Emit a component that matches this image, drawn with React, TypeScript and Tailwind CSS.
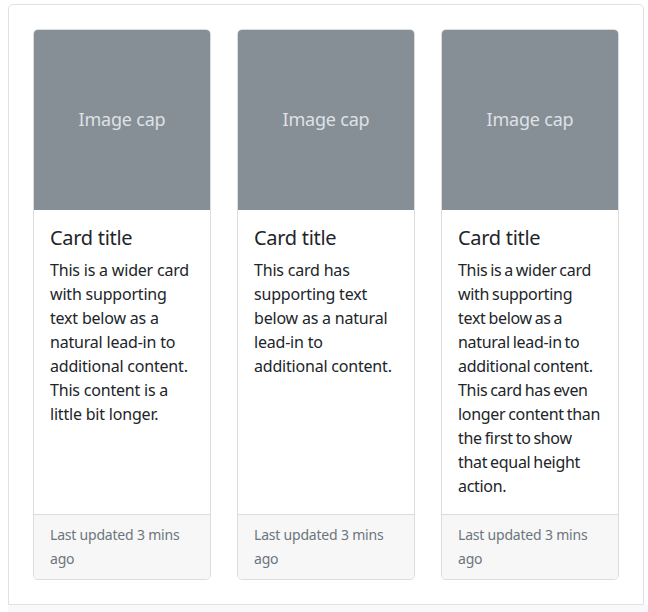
const cards = [
  {
    title: "Card title",
    text: "This is a wider card with supporting text below as a natural lead-in to additional content. This content is a little bit longer.",
    textClass: "tracking-[-0.2px]",
  },
  {
    title: "Card title",
    text: "This card has supporting text below as a natural lead-in to additional content.",
    textClass: "tracking-[-0.2px]",
  },
  {
    title: "Card title",
    text: "This is a wider card with supporting text below as a natural lead-in to additional content. This card has even longer content than the first to show that equal height action.",
    // tighter spacing so "longer content than" stays on one line
    textClass: "tracking-[-0.3px] [word-spacing:-1px]",
  },
];

function Card({ title, text, textClass }: { title: string; text: string; textClass: string }) {
  return (
    <div className="flex flex-col rounded-[5px] border border-[#dcdcdc] bg-white overflow-hidden">
      <div className="flex h-[180px] items-center justify-center bg-[#868e96] pb-0.5 text-[18px] tracking-[-0.2px] text-[#dee2e6]">
        Image cap
      </div>
      <div className="flex-1 p-4">
        <h5 className="mb-2 text-[20px] leading-[1.2] tracking-[-0.3px] text-[#212529]">{title}</h5>
        <p className={`text-base leading-6 text-[#212529] ${textClass}`}>{text}</p>
      </div>
      <div className="border-t border-[#dcdcdc] bg-[#f7f7f7] px-4 py-2">
        <p className="text-sm leading-6 tracking-[-0.2px] text-[#6c757d]">Last updated 3 mins ago</p>
      </div>
    </div>
  );
}

export default function App() {
  return (
    <div
      className="min-h-screen bg-white pl-2 pt-1"
      style={{ fontFamily: '"Noto Sans", "Liberation Sans", sans-serif' }}
    >
      <div className="w-[636px] rounded-t-[5px] border border-[#dee2e6] p-6">
        <div className="grid grid-cols-3 gap-[26px]">
          {cards.map((c, i) => (
            <Card key={i} {...c} />
          ))}
        </div>
      </div>
      <div className="h-8 bg-[#f8f9fa]" />
    </div>
  );
}
